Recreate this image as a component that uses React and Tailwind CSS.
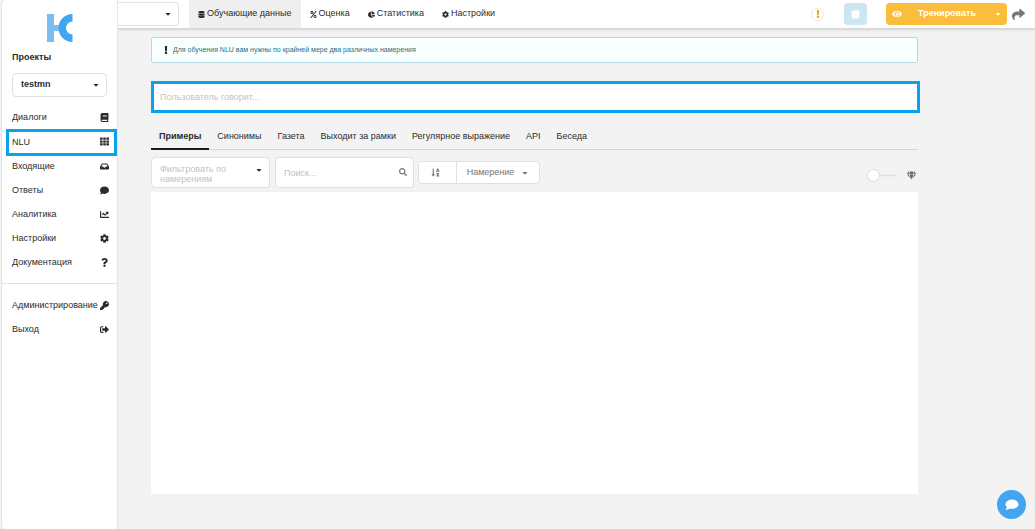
import React, { useState } from 'react'
import {
  FaBook, FaTh, FaInbox, FaComment, FaChartLine, FaCog, FaQuestion, FaKey, FaSignOutAlt, FaDatabase,
  FaPercent, FaChartPie, FaExclamation, FaEye, FaShare, FaStop, FaSearch, FaGem, FaCaretDown, FaSortAlphaDown,
} from 'react-icons/fa'

const menu = [
  { label: 'Диалоги', icon: FaBook },
  { label: 'NLU', icon: FaTh },
  { label: 'Входящие', icon: FaInbox },
  { label: 'Ответы', icon: FaComment },
  { label: 'Аналитика', icon: FaChartLine },
  { label: 'Настройки', icon: FaCog },
  { label: 'Документация', icon: FaQuestion },
]

const accountMenu = [
  { label: 'Администрирование', icon: FaKey },
  { label: 'Выход', icon: FaSignOutAlt },
]

const topTabs = [
  { label: 'Обучающие данные', icon: FaDatabase },
  { label: 'Оценка', icon: FaPercent },
  { label: 'Статистика', icon: FaChartPie },
  { label: 'Настройки', icon: FaCog },
]

const dataTabs = ['Примеры', 'Синонимы', 'Газета', 'Выходит за рамки', 'Регулярное выражение', 'API', 'Беседа']

const Logo = () => (
  <svg width="26" height="28" viewBox="0 0 26 28" aria-hidden="true">
    <path d="M0 0h7v11h5v6H7v11H0z" fill="#7dbcf0" />
    <path d="M25.500 0v7.500a6.500 6.500 0 0 0 0 13V28A14 14 0 0 1 25.500 0z" fill="#42a5f0" />
  </svg>
)

const ChatBubble = () => (
  <svg width="14" height="12" viewBox="0 0 14 12" fill="currentColor" aria-hidden="true">
    <ellipse cx="7" cy="5.200" rx="6.500" ry="4.700" />
    <path d="M1.800 7.500c0 1.500-.5 2.400-1.300 3.300 1.800 0 3.200-.5 4.300-1.600z" />
  </svg>
)

const MenuItem = ({ label, icon: Icon, active }) => (
  <a
    href="#"
    className={
      active
        ? 'flex h-[27px] items-center justify-between border-3 border-[#0aa2ea] ml-1 pl-[3px] pr-[5px] -my-px'
        : 'flex h-[24px] items-center justify-between pl-[10px] pr-2'
    }
  >
    <span className="whitespace-nowrap">{label}</span>
    <span className="flex h-[11px] w-[10px] justify-center">
      <Icon size={9} />
    </span>
  </a>
)

const Sidebar = () => (
  <aside className="z-10 ml-[2px] w-[115px] shrink-0 rounded-l-sm bg-white shadow-[0_0_1px_1px_#e4e4e4]">
    <div className="flex justify-center pt-[14px]">
      <Logo />
    </div>
    <div className="px-[10px] pt-[7px]">
      <label htmlFor="project" className="block font-bold leading-4">Проекты</label>
      <div className="relative mt-2">
        <select
          id="project"
          className="block h-[24px] w-full appearance-none rounded-sm border border-[#e0e0e0] bg-white px-2 font-bold"
        >
          <option>testmn</option>
        </select>
        <FaCaretDown size={8} className="pointer-events-none absolute right-[7px] top-2" />
      </div>
    </div>
    <nav className="flex flex-col pt-[9px]">
      {menu.map((item) => (
        <MenuItem key={item.label} {...item} active={item.label === 'NLU'} />
      ))}
    </nav>
    <nav className="mt-2 flex flex-col border-t border-[#e0e0e0] pt-[10px]">
      {accountMenu.map((item) => (
        <MenuItem key={item.label} {...item} />
      ))}
    </nav>
  </aside>
)

const TopBar = () => (
  <header className="flex h-[29px] items-center border-b border-[#d8d8d8] bg-white shadow-sm">
    <div className="relative w-[62px]">
      <select
        aria-label="Язык"
        className="block h-[24px] w-full appearance-none rounded-r-sm border border-l-0 border-[#e2e2e2] bg-white"
      >
        <option></option>
      </select>
      <FaCaretDown size={8} className="pointer-events-none absolute right-[7px] top-2" />
    </div>
    <nav className="ml-[10px] flex h-full">
      {topTabs.map(({ label, icon: Icon }, i) => (
        <a
          key={label}
          href="#"
          className={
            i === 0
              ? 'flex items-center gap-[2px] bg-[#efefef] px-[9px]'
              : 'flex items-center gap-[2px] px-[9px]'
          }
        >
          <Icon size={7} />
          {label}
        </a>
      ))}
    </nav>
    <div className="ml-auto flex items-center pr-[10px]">
      <span className="mr-5 flex size-[13px] items-center justify-center rounded-full border border-[#e5e5e5] text-[#f2a033]">
        <FaExclamation size={8} />
      </span>
      <button aria-label="Остановить" className="mr-[19px] flex h-[22px] w-[23px] items-center justify-center rounded-sm bg-[#cbe5f1] text-white">
        <FaStop size={9} />
      </button>
      <div className="mr-[5px] flex h-[22px] w-[121px] rounded-sm bg-[#fbbd3c] text-white">
        <button className="flex flex-1 items-center pl-[6px] font-bold">
          <FaEye size={10} />
          <span className="flex-1 pl-1 text-center">Тренировать</span>
        </button>
        <button aria-label="Ещё" className="flex w-[19px] items-center justify-center">
          <FaCaretDown size={8} />
        </button>
      </div>
      <button aria-label="Поделиться" className="text-[#75797c]">
        <FaShare size={13} />
      </button>
    </div>
  </header>
)

const DataTabs = () => {
  const [current, setCurrent] = useState('Примеры')
  return (
    <div className="mt-3 flex h-[25px] border-b border-[#d4d4d5]">
      {dataTabs.map((tab) => (
        <button
          key={tab}
          onClick={() => setCurrent(tab)}
          className={
            tab === current
              ? '-mb-px border-b-2 border-[#1b1c1d] px-2 font-bold'
              : '-mb-px border-b-2 border-transparent px-2'
          }
        >
          {tab}
        </button>
      ))}
    </div>
  )
}

const Filters = () => (
  <div className="mt-[7px] flex items-center">
    <div className="relative h-[31px] w-[119px] rounded-sm border border-[#e0e0e0] bg-white">
      <label htmlFor="intents" className="block w-[80px] py-[6px] pl-2 leading-[10px] text-[#c2c2c2]">
        Фильтровать по намерениям
      </label>
      <select id="intents" className="absolute inset-0 w-full opacity-0">
        <option></option>
      </select>
      <FaCaretDown size={8} className="pointer-events-none absolute right-[6px] top-2" />
    </div>
    <div className="relative ml-[5px]">
      <input
        type="text"
        aria-label="Поиск"
        placeholder="Поиск..."
        className="block h-[31px] w-[139px] rounded-sm border border-[#e0e0e0] bg-white pl-2 pr-5 placeholder:text-[#c2c2c2]"
      />
      <FaSearch size={8} className="absolute right-[7px] top-[11px] text-[#777]" />
    </div>
    <div className="ml-1 flex h-[23px] w-[122px] rounded-sm border border-[#e0e0e0] bg-white text-[#767676]">
      <button aria-label="Сортировать" className="flex w-[38px] items-center justify-center border-r border-[#e0e0e0] pr-1">
        <FaSortAlphaDown size={9} />
      </button>
      <button className="flex flex-1 items-center justify-center gap-[7px]">
        Намерение
        <FaCaretDown size={8} />
      </button>
    </div>
    <div className="ml-auto mt-[6px] flex items-center gap-[10px] pr-[2px]">
      <input
        type="range"
        min="0"
        max="1"
        defaultValue="0"
        aria-label="Только канонические"
        className="h-[13px] w-[30px] appearance-none bg-linear-to-b from-transparent from-40% via-[#e0e0e0] via-50% to-transparent to-60% [&::-webkit-slider-thumb]:size-[13px] [&::-webkit-slider-thumb]:appearance-none [&::-webkit-slider-thumb]:rounded-full [&::-webkit-slider-thumb]:border [&::-webkit-slider-thumb]:border-[#dcdcdc] [&::-webkit-slider-thumb]:bg-white"
      />
      <FaGem size={9} className="text-[#666]" />
    </div>
  </div>
)

const App = () => {
  return (
    <div className="flex min-h-screen bg-[#f3f3f3] font-['Liberation_Sans',sans-serif] text-[9px] text-[#2b2b2b]">
      <Sidebar />
      <div className="min-w-0 flex-1">
        <TopBar />
        <main className="pb-[34px] pl-[34px] pr-[117px] pt-2">
          <div className="flex h-[26px] items-center gap-[3px] rounded-xs border border-[#b5dae6] bg-[#f8ffff] px-[10px] text-[7px] text-[#276f86]">
            <FaExclamation size={8} className="text-[#222]" />
            Для обучения NLU вам нужны по крайней мере два различных намерения
          </div>
          <div className="-mr-[2px] mt-[18px]">
            <input
              type="text"
              aria-label="Пользователь говорит"
              placeholder="Пользователь говорит..."
              className="block h-8 w-full border-3 border-[#0aa2ea] bg-white px-[6px] placeholder:text-[#c2c2c2]"
            />
          </div>
          <DataTabs />
          <Filters />
          <div className="mt-1 h-[302px] bg-white"></div>
        </main>
      </div>
      <button
        aria-label="Чат"
        className="fixed bottom-[10px] right-[9px] flex size-[29px] items-center justify-center rounded-full bg-[#42a5f0] text-white"
      >
        <ChatBubble />
      </button>
    </div>
  )
}

export default App
